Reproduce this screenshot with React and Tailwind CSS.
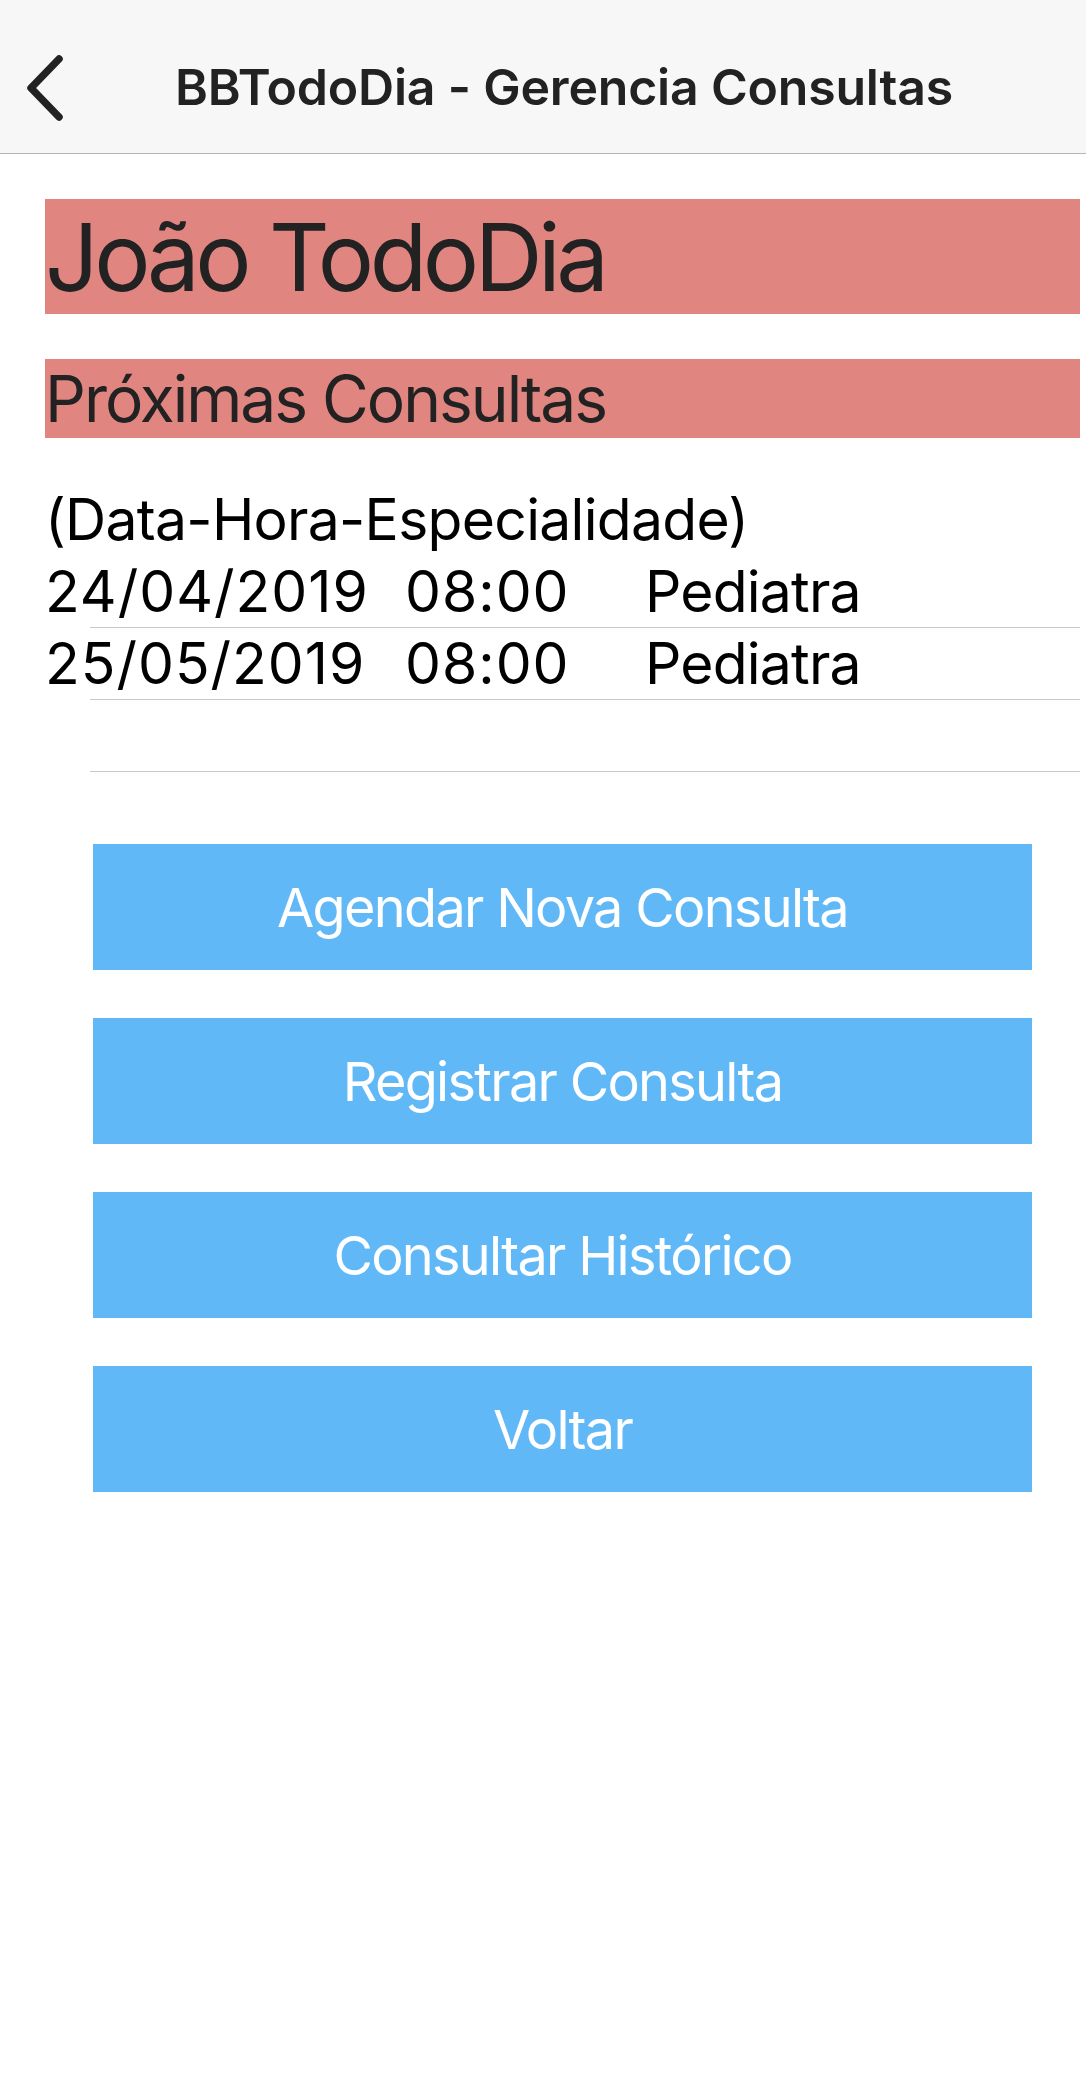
export default function App() {
  const consultas = [
    { data: "24/04/2019", hora: "08:00", esp: "Pediatra" },
    { data: "25/05/2019", hora: "08:00", esp: "Pediatra" },
  ];

  const botoes = [
    "Agendar Nova Consulta",
    "Registrar Consulta",
    "Consultar Histórico",
    "Voltar",
  ];

  return (
    <div
      className="w-[1086px] min-h-[2082px] bg-white"
      style={{ fontFamily: "Inter, 'Noto Sans', sans-serif" }}
    >
      {/* Nav bar */}
      <div className="h-[154px] bg-[#f7f7f7] border-b border-[#b5b5b5] flex items-center">
        <svg
          width="40"
          height="66"
          viewBox="0 0 40 66"
          className="ml-[25px] mt-[22px]"
        >
          <polyline
            points="34,4 6,33 34,62"
            fill="none"
            stroke="#222"
            strokeWidth="7.5"
            strokeLinecap="round"
            strokeLinejoin="round"
          />
        </svg>
        <h1 className="ml-[110px] mt-[22px] text-[50px] font-semibold text-[#222] tracking-[-0.2px]">
          BBTodoDia - Gerencia Consultas
        </h1>
      </div>

      <div className="pl-[45px] pr-[6px]">
        <div className="mt-[45px] h-[115px] bg-[#e08580] flex items-center">
          <h2 className="text-[94px] text-[#222] leading-none -tracking-[4.5px]">
            João TodoDia
          </h2>
        </div>

        <div className="mt-[45px] h-[79px] bg-[#e08580] flex items-center">
          <h3 className="text-[64px] text-[#222] leading-none -tracking-[2px]">
            Próximas Consultas
          </h3>
        </div>

        {/* Lista */}
        <div className="mt-[46px] text-[57px] text-black">
          <p className="leading-[72px] -tracking-[0.7px]">(Data-Hora-Especialidade)</p>
          {consultas.map((c, i) => (
            <div key={i}>
              <div className="flex leading-[71px] tracking-[1px]">
                <span className="w-[360px]">{c.data}</span>
                <span className="w-[240px]">{c.hora}</span>
                <span className="-tracking-[0.8px]">{c.esp}</span>
              </div>
              <div className="ml-[45px] h-px bg-[#c8c8c8]" />
            </div>
          ))}
          <div className="h-[71px]" />
          <div className="ml-[45px] h-px bg-[#c8c8c8]" />
        </div>

        {/* Botões */}
        <div className="mt-[72px] ml-[48px] w-[939px] flex flex-col gap-[48px]">
          {botoes.map((b) => (
            <button
              key={b}
              className="h-[126px] bg-[#61b8f7] text-white text-[54px] -tracking-[1.7px]"
            >
              {b}
            </button>
          ))}
        </div>
      </div>
    </div>
  );
}
